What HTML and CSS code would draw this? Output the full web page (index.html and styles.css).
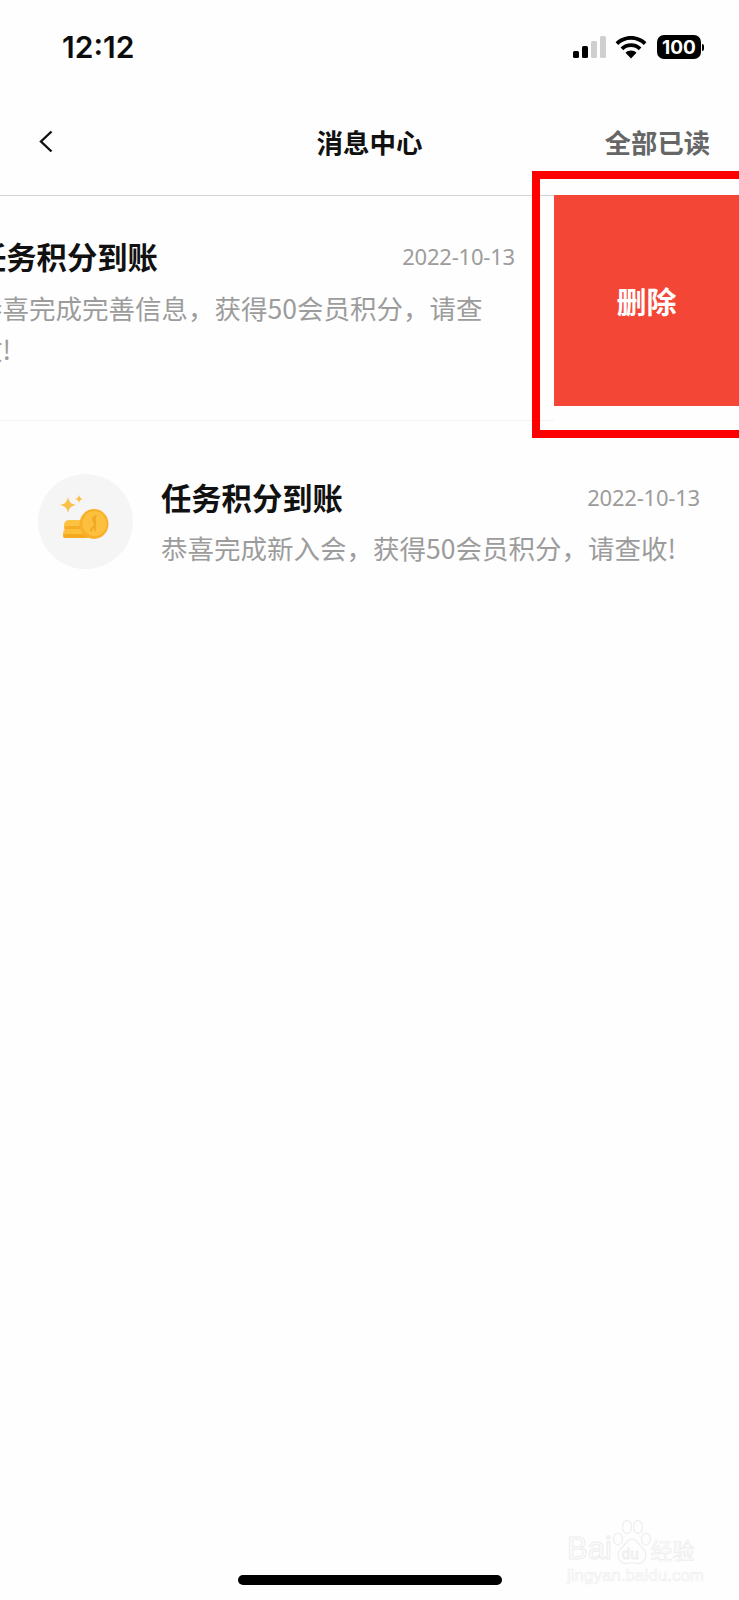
FILE: index.html
```html
<!DOCTYPE html>
<html lang="zh">
<head>
<meta charset="utf-8">
<title>消息中心</title>
<link rel="stylesheet" href="styles.css">
</head>
<body>
<div class="screen">
  <div class="status">
    <span class="clock">12:12</span>
    <div class="status-icons">
      <div class="signal">
        <i class="bar bar1"></i><i class="bar bar2"></i><i class="bar bar3"></i><i class="bar bar4"></i>
      </div>
      <svg class="wifi" width="32" height="23" viewBox="0 0 32 23">
        <path d="M16 0C10 0 4.600 2.300 .6 6.200l2.600 2.800C6.500 5.800 11 3.800 16 3.800s9.500 2 12.800 5.200l2.600-2.800C27.400 2.300 22 0 16 0z"/>
        <path d="M16 7.300c-4 0-7.700 1.600-10.400 4.100l2.700 2.800c2-1.900 4.700-3.100 7.700-3.100s5.700 1.200 7.700 3.100l2.700-2.800C23.700 8.900 20 7.300 16 7.300z"/>
        <path d="M16 14.500c-2.200 0-4.100.8-5.500 2.200L16 22.600l5.500-5.900c-1.400-1.400-3.300-2.200-5.500-2.200z"/>
      </svg>
      <div class="battery"><span class="battery-body">100</span><i class="battery-cap"></i></div>
    </div>
  </div>

  <header class="nav">
    <svg class="back" width="14" height="23" viewBox="0 0 14 23"><path d="M12.500 1.500 2 11.500l10.500 10" fill="none" stroke="#111" stroke-width="2.400"/></svg>
    <h1 class="nav-title">消息中心</h1>
    <span class="nav-action">全部已读</span>
  </header>

  <div class="list">
    <div class="swipe">
      <div class="row">
        <div class="avatar"></div>
        <div class="texts">
          <div class="head"><span class="title">任务积分到账</span><span class="date">2022-10-13</span></div>
          <p class="body">恭喜完成完善信息，获得50会员积分，请查收!</p>
        </div>
      </div>
      <button class="delete">删除</button>
    </div>
    <div class="row row-plain">
      <div class="avatar">
        <svg width="95" height="95" viewBox="0 0 95 95">
          <path d="M30 23c1.200 5.200 2.800 7 8 8-5.200 1-6.800 2.800-8 8-1.200-5.200-2.800-7-8-8 5.200-1 6.800-2.800 8-8z" fill="#fbc04a"/>
          <path d="M41 21c.6 2.500 1.500 3.400 4 4-2.500.6-3.400 1.500-4 4-.6-2.500-1.500-3.400-4-4 2.500-.6 3.400-1.500 4-4z" fill="#fbc04a"/>
          <rect x="26" y="46" width="24" height="10" rx="5" fill="#fcc242"/>
          <rect x="26" y="52" width="24" height="4" rx="2" fill="#f6ad23"/>
          <rect x="25" y="55" width="26" height="9" rx="4.500" fill="#fcbf3c"/>
          <rect x="25" y="60" width="26" height="4" rx="2" fill="#f5a91f"/>
          <ellipse cx="56" cy="50" rx="14.500" ry="15" fill="#f8b02a"/>
          <ellipse cx="56.500" cy="49.500" rx="12" ry="12.500" fill="#fcc03e"/>
          <path d="M58.500 42c-3.500.5-4.500 2.500-3 5s2 5-.5 6.500-3 2.500-1 4M57 43v14" fill="none" stroke="#eda620" stroke-width="1.500"/>
        </svg>
      </div>
      <div class="texts">
        <div class="head"><span class="title">任务积分到账</span><span class="date">2022-10-13</span></div>
        <p class="body">恭喜完成新入会，获得50会员积分，请查收!</p>
      </div>
    </div>
  </div>

  <div class="annotation"></div>

  <div class="watermark">
    <svg class="paw" width="40" height="45" viewBox="0 0 40 45">
      <g fill="none" stroke="#ececec" stroke-width="1.100">
        <ellipse cx="6" cy="19" rx="4.500" ry="6"/>
        <ellipse cx="15" cy="7" rx="4.500" ry="6.500"/>
        <ellipse cx="26" cy="7" rx="4.500" ry="6.500"/>
        <ellipse cx="34" cy="19" rx="4.500" ry="6"/>
        <path d="M20 19c-5 0-6.500 5.500-11 9.500-5 4.500-3 15 4.500 15 2.500 0 4.500-1 6.500-1s4 1 6.500 1c7.500 0 9.500-10.500 4.500-15-4.500-4-6-9.500-11-9.500z"/>
      </g>
    </svg>
    <div class="wm-line"><span class="wm-baidu">Bai</span><span class="wm-du">du</span><span class="wm-cn">经验</span></div>
    <div class="wm-url">jingyan.baidu.com</div>
  </div>

  <div class="home-bar"></div>
</div>
</body>
</html>
```
FILE: styles.css
```css
* { box-sizing: border-box; }

html, body {
  margin: 0;
  background: #fefefe;
}

.screen {
  position: relative;
  width: 739px;
  height: 1600px;
  overflow: hidden;
  background: #fefefe;
  color: #111;
  font-family: "Noto Sans", "Noto Sans CJK SC", sans-serif;
}

/* status bar */
.status {
  display: flex;
  align-items: center;
  justify-content: space-between;
  height: 94px;
  padding: 0 35px 0 62px;
}

.clock {
  font-family: Inter, "Liberation Sans", sans-serif;
  font-size: 30px;
  font-weight: 600;
  color: #0c0c0c;
}

.status-icons {
  display: flex;
  align-items: center;
  gap: 10px;
}

.signal {
  display: flex;
  align-items: flex-end;
  gap: 3px;
  height: 22px;
  margin-right: -1px;
}

.bar {
  display: block;
  width: 6px;
  border-radius: 1.500px;
  background: #000;
}

.bar1 { height: 7px; }
.bar2 { height: 12px; }
.bar3 { height: 17px; background: #cfcfcf; }
.bar4 { height: 22px; background: #cfcfcf; }

.wifi { display: block; }

.battery {
  display: flex;
  align-items: center;
  gap: 1px;
}

.battery-body {
  display: block;
  width: 44px;
  height: 24px;
  border-radius: 7px;
  background: #000;
  color: #fff;
  font-family: Inter, "Liberation Sans", sans-serif;
  font-size: 19px;
  font-weight: 700;
  line-height: 25px;
  text-align: center;
}

.battery-cap {
  display: block;
  width: 2px;
  height: 7px;
  border-radius: 0 2px 2px 0;
  background: #000;
}

/* navigation */
.nav {
  display: flex;
  align-items: center;
  justify-content: space-between;
  height: 102px;
  padding: 0 29px 6px 39px;
  border-bottom: 1px solid #d2d2d2;
}

.nav-title {
  position: absolute;
  left: 0;
  right: 0;
  margin: 0;
  text-align: center;
  font-family: "Noto Sans CJK SC", sans-serif;
  font-size: 26.500px;
  font-weight: 700;
  line-height: 36px;
  color: #111;
  pointer-events: none;
}

.nav-action {
  font-family: "Noto Sans CJK SC", sans-serif;
  font-size: 26.300px;
  font-weight: 700;
  line-height: 36px;
  color: #666;
}

/* list */
.swipe {
  display: flex;
  align-items: flex-start;
  width: 924px;
  margin-left: -185px;
}

.row {
  display: flex;
  align-items: flex-start;
  gap: 28px;
  width: 739px;
  flex: none;
  padding: 39px 39px 51px 38px;
  border-bottom: 1px solid #f3f3f3;
}

.row-plain {
  padding-top: 53px;
  border-bottom: 0;
}

.avatar {
  flex: none;
  width: 95px;
  height: 95px;
  border-radius: 50%;
  background: #f5f5f5;
}

.avatar svg { display: block; }

.texts {
  flex: 1;
  min-width: 0;
}

.row-plain .texts { padding-top: 2px; }

.head {
  display: flex;
  align-items: center;
  justify-content: space-between;
  height: 42px;
  margin-bottom: 10px;
}

.row-plain .head { margin-bottom: 9px; }

.title {
  font-family: "Noto Sans CJK SC", sans-serif;
  font-size: 30.300px;
  font-weight: 700;
  color: #111;
}

.date {
  font-size: 22px;
  letter-spacing: -0.2px;
  color: #9c9c9c;
}

.body {
  margin: 0;
  font-family: "Noto Sans CJK SC", sans-serif;
  font-size: 26.500px;
  line-height: 41px;
  color: #9c9c9c;
}

.delete {
  flex: none;
  width: 185px;
  height: 211px;
  margin-top: -1px;
  padding: 0 0 1px;
  border: 0;
  background: #f44637;
  color: #fff;
  font-family: "Noto Sans CJK SC", sans-serif;
  font-size: 30px;
  font-weight: 700;
}

/* red annotation frame drawn over the screenshot */
.annotation {
  position: absolute;
  left: 532px;
  top: 171px;
  width: 240px;
  height: 267px;
  border: 8px solid #f00;
}

/* watermark */
.watermark {
  position: absolute;
  left: 567px;
  top: 1520px;
  width: 134px;
  color: transparent;
}

.paw {
  position: absolute;
  left: 45px;
  top: 0;
}

.wm-line {
  display: flex;
  align-items: baseline;
  height: 46px;
  padding-top: 14px;
  font-family: "Liberation Sans", sans-serif;
}

.wm-baidu {
  font-size: 31px;
  line-height: 30px;
  -webkit-text-stroke: 1px #ededed;
}

.wm-du {
  margin: 0 12px 0 10px;
  font-size: 15px;
  -webkit-text-stroke: .8px #ededed;
}

.wm-cn {
  font-family: "Noto Sans CJK SC", sans-serif;
  font-size: 22px;
  line-height: 30px;
  -webkit-text-stroke: .7px #ededed;
}

.wm-url {
  margin-top: 1px;
  font-family: "Liberation Sans", sans-serif;
  font-size: 17px;
  line-height: 18px;
  white-space: nowrap;
  -webkit-text-stroke: .7px #f0f0f0;
}

/* home indicator */
.home-bar {
  position: absolute;
  left: 238px;
  top: 1575px;
  width: 264px;
  height: 10px;
  border-radius: 5px;
  background: #000;
}
```
